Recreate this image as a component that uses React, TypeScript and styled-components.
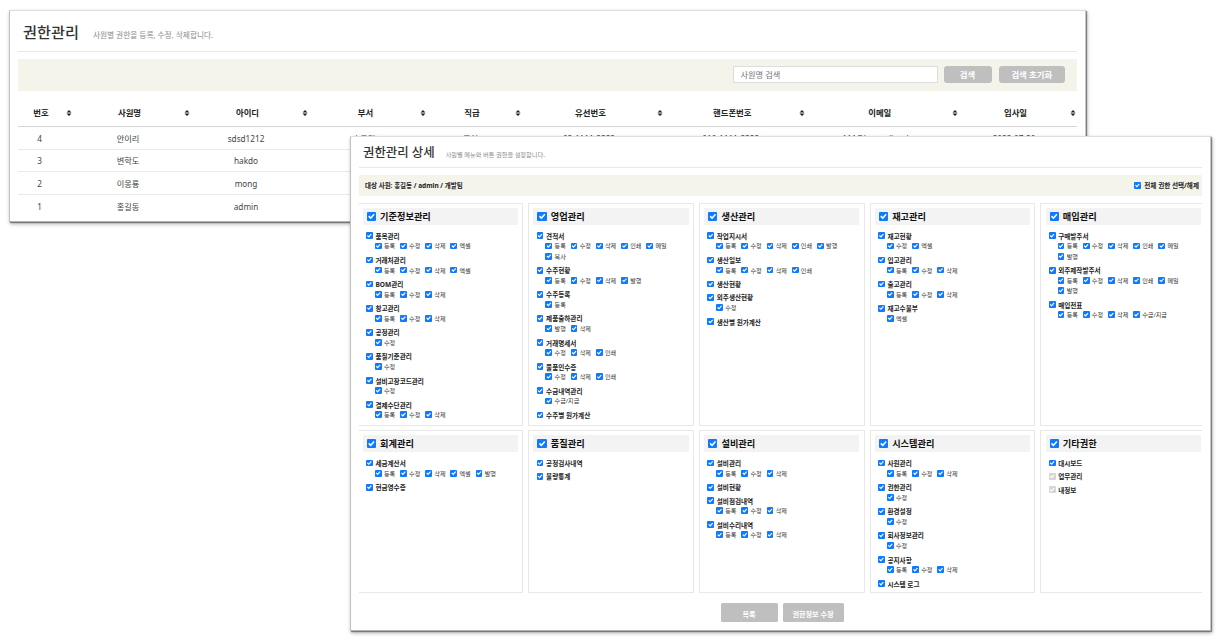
import React from 'react';
import styled, { createGlobalStyle, css } from 'styled-components';

const GlobalStyle = createGlobalStyle`
  * {
    box-sizing: border-box;
  }

  body {
    margin: 0;
    background: #fff;
    font-family: 'Noto Sans', 'Noto Sans CJK KR', sans-serif;
    color: #222;
  }
`;

const Desktop = styled('main')`
  position: relative;
  width: 1222px;
  height: 643px;
  overflow: hidden;
`;

const windowFrame = css`
  position: absolute;
  display: flex;
  flex-direction: column;
  background: #fff;
  border: 1px solid;
  border-color: #dedede #c6c6c6 #b4b4b4 #c0c0c0;
  box-shadow: 1px 1px 1px rgba(0, 0, 0, 0.38), 1px 2px 4px rgba(0, 0, 0, 0.32);
`;

const ListWindow = styled('section')`
  ${windowFrame}
  left: 9px;
  top: 10px;
  width: 1077px;
  height: 212px;
  padding: 0 8px;
`;

const DetailWindow = styled('section')`
  ${windowFrame}
  left: 350px;
  top: 136px;
  width: 861px;
  height: 495px;
  padding: 0 8px;
`;

const PageHeader = styled('header')<{ $compact?: boolean }>`
  display: flex;
  flex: none;
  align-items: center;
  gap: ${(props) => (props.$compact ? '11px' : '14px')};
  height: ${(props) => (props.$compact ? '31px' : '41px')};
  padding-top: ${(props) => (props.$compact ? '1px' : '2px')};
  padding-left: ${(props) => (props.$compact ? '4px' : '5px')};
  border-bottom: 1px solid #e8e8e8;
`;

const PageTitle = styled('h1')<{ $compact?: boolean }>`
  margin: 0;
  font-size: ${(props) => (props.$compact ? '12.4px' : '15.2px')};
  line-height: 20px;
  font-weight: 500;
  color: #333;
  white-space: nowrap;
`;

const PageDescription = styled('p')<{ $compact?: boolean }>`
  margin: ${(props) => (props.$compact ? '4px' : '5px')} 0 0;
  font-size: ${(props) => (props.$compact ? '6.2px' : '7.7px')};
  line-height: 10px;
  color: #8c8c8c;
  white-space: nowrap;
`;

const SearchBar = styled('div')`
  display: flex;
  flex: none;
  justify-content: flex-end;
  align-items: flex-start;
  height: 32px;
  margin-top: 7px;
  padding: 6.5px 12px 0 0;
  background: #f4f4eb;
`;

const SearchInput = styled('input')`
  width: 205px;
  height: 17px;
  margin-right: 6px;
  padding: 0 7px;
  border: 1px solid #ddd;
  font-family: inherit;
  font-size: 8.2px;
  outline: none;

  &::placeholder {
    color: #777;
  }
`;

const SearchButton = styled('button')<{ $width: number }>`
  width: ${(props) => props.$width}px;
  height: 17px;
  padding: 0;
  border: 0;
  border-radius: 3px;
  background: #bfbfbf;
  color: #fff;
  font-family: inherit;
  font-size: 8.4px;
  font-weight: 700;
  line-height: 17px;

  & + & {
    margin-left: 7px;
  }
`;

const TableRow = styled('div')<{ $head?: boolean }>`
  display: grid;
  flex: none;
  grid-template-columns: 55px 118px 118px 118px 95px 142px 141.5px 153.5px 118px;
  align-items: center;
  height: ${(props) => (props.$head ? '36px' : '22.6px')};
  padding-top: ${(props) => (props.$head ? '8px' : '2px')};
  border-bottom: ${(props) => (props.$head ? '1px solid #d5d5d5' : '1px solid #eaeaea')};

  &:last-child {
    border-bottom: 0;
  }
`;

const HeadCell = styled('div')`
  display: flex;
  align-items: center;
  padding-right: 1px;
  font-size: 8.4px;
  font-weight: 700;
  line-height: 12px;

  span {
    flex: 1;
    padding-left: 2px;
    text-align: center;
    white-space: nowrap;
  }

  &:first-child span {
    padding: 0 2px 0 0;
  }
`;

const BodyCell = styled('div')`
  padding-right: 8px;
  font-size: 8.2px;
  line-height: 12px;
  color: #444;
  text-align: center;
  white-space: nowrap;

  &:first-child {
    padding-right: 12px;
  }
`;

const TargetBar = styled('div')`
  display: flex;
  flex: none;
  justify-content: space-between;
  align-items: center;
  height: 21px;
  margin-top: 7px;
  padding: 0 3px 0 6px;
  background: #f4f4eb;
  font-size: 6.5px;
  font-weight: 700;
  line-height: 10px;
  white-space: nowrap;
`;

const PanelGrid = styled('div')`
  display: grid;
  flex: none;
  grid-template-columns: repeat(5, 165.6px);
  grid-template-rows: 222.5px 163px;
  gap: 4.8px 5.1px;
  height: 391px;
  margin-top: 7px;
  overflow: hidden;
`;

const Panel = styled('section')`
  width: 165.6px;
  margin-left: -1.4px;
  padding: 4px 4.2px 0;
  border: 1px solid #e8e8e8;
`;

const PanelTitle = styled('label')`
  display: flex;
  align-items: center;
  gap: 4px;
  height: 17px;
  margin-bottom: 5.8px;
  padding-left: 4px;
  background: #f3f3f3;
  font-size: 9.2px;
  font-weight: 700;
  line-height: 16px;
  color: #111;
  white-space: nowrap;
`;

const Checkbox = styled('input').attrs({ type: 'checkbox' })<{ $size: number }>`
  flex: none;
  display: grid;
  place-items: center;
  appearance: none;
  width: ${(props) => props.$size}px;
  height: ${(props) => props.$size}px;
  margin: 0;
  border-radius: 1px;
  background: #fff;

  &:checked {
    background: #0d7aff;
  }

  &:checked::before {
    content: '';
    width: 76%;
    height: 76%;
    background: #fff;
    clip-path: polygon(4% 52%, 20% 36%, 39% 56%, 80% 10%, 96% 25%, 40% 88%);
  }

  &:disabled {
    background: #d6d6d6;
  }
`;

const MenuItem = styled('div')`
  margin-bottom: 3.4px;
  padding-left: 3.2px;
`;

const MenuLabel = styled('label')<{ $gap?: number }>`
  display: flex;
  align-items: center;
  gap: ${(props) => props.$gap ?? 2.6}px;
  height: 10px;
  font-size: 6.6px;
  font-weight: 700;
  color: #222;
  white-space: nowrap;
`;

const ActionList = styled('div')`
  display: flex;
  flex-wrap: wrap;
  column-gap: 4.9px;
  padding: 0 0 0.45px 8.8px;
`;

const ActionLabel = styled('label')`
  display: flex;
  align-items: center;
  gap: 2.3px;
  height: 10.3px;
  font-size: 6.1px;
  color: #333;
  white-space: nowrap;
`;

const Footer = styled('footer')`
  display: flex;
  justify-content: center;
  gap: 5px;
  margin-top: 9px;
  padding-left: 3px;
`;

const FooterButton = styled('button')<{ $width: number }>`
  width: ${(props) => props.$width}px;
  height: 19px;
  padding: 2px 0 0;
  border: 0;
  border-radius: 1.5px;
  background: #bfbfbf;
  color: #fff;
  font-family: inherit;
  font-size: 7.1px;
  font-weight: 700;
`;

const SortIcon = () => (
  <svg width="6" height="6" viewBox="0 0 6 6" aria-hidden="true">
    <path d="M3 0L5.5 2.6H.5zM3 6L.5 3.4h5z" fill="#222" />
  </svg>
);

const columns = ['번호', '사원명', '아이디', '부서', '직급', '유선번호', '핸드폰번호', '이메일', '입사일'];

const employees = [
  ['4', '안이리', 'sdsd1212', '총무팀', '주임', '02-1111-2222', '010-1111-2222', '111@hotmail.co.kr', '2023-07-20'],
  ['3', '변학도', 'hakdo'],
  ['2', '이몽룡', 'mong'],
  ['1', '홍길동', 'admin'],
];

interface Menu {
  name: string;
  actions?: string;
  disabled?: boolean;
}

interface MenuGroup {
  title: string;
  menus: Menu[];
}

const groups: MenuGroup[] = [
  {
    title: '기준정보관리',
    menus: [
      { name: '품목관리', actions: '등록 수정 삭제 엑셀' },
      { name: '거래처관리', actions: '등록 수정 삭제 엑셀' },
      { name: 'BOM관리', actions: '등록 수정 삭제' },
      { name: '창고관리', actions: '등록 수정 삭제' },
      { name: '공정관리', actions: '수정' },
      { name: '품질기준관리', actions: '수정' },
      { name: '설비고장코드관리', actions: '수정' },
      { name: '결제수단관리', actions: '등록 수정 삭제' },
    ],
  },
  {
    title: '영업관리',
    menus: [
      { name: '견적서', actions: '등록 수정 삭제 인쇄 메일 복사' },
      { name: '수주현황', actions: '등록 수정 삭제 발행' },
      { name: '수주등록', actions: '등록' },
      { name: '제품출하관리', actions: '발행 삭제' },
      { name: '거래명세서', actions: '수정 삭제 인쇄' },
      { name: '물품인수증', actions: '수정 삭제 인쇄' },
      { name: '수금내역관리', actions: '수금/지급' },
      { name: '수주별 원가계산' },
    ],
  },
  {
    title: '생산관리',
    menus: [
      { name: '작업지시서', actions: '등록 수정 삭제 인쇄 발행' },
      { name: '생산일보', actions: '등록 수정 삭제 인쇄' },
      { name: '생산현황' },
      { name: '외주생산현황', actions: '수정' },
      { name: '생산별 원가계산' },
    ],
  },
  {
    title: '재고관리',
    menus: [
      { name: '재고현황', actions: '수정 엑셀' },
      { name: '입고관리', actions: '등록 수정 삭제' },
      { name: '출고관리', actions: '등록 수정 삭제' },
      { name: '재고수불부', actions: '엑셀' },
    ],
  },
  {
    title: '매입관리',
    menus: [
      { name: '구매발주서', actions: '등록 수정 삭제 인쇄 메일 발행' },
      { name: '외주제작발주서', actions: '등록 수정 삭제 인쇄 메일 발행' },
      { name: '매입전표', actions: '등록 수정 삭제 수금/지급' },
    ],
  },
  {
    title: '회계관리',
    menus: [{ name: '세금계산서', actions: '등록 수정 삭제 엑셀 발행' }, { name: '현금영수증' }],
  },
  {
    title: '품질관리',
    menus: [{ name: '공정검사내역' }, { name: '불량통계' }],
  },
  {
    title: '설비관리',
    menus: [
      { name: '설비관리', actions: '등록 수정 삭제' },
      { name: '설비현황' },
      { name: '설비점검내역', actions: '등록 수정 삭제' },
      { name: '설비수리내역', actions: '등록 수정 삭제' },
    ],
  },
  {
    title: '시스템관리',
    menus: [
      { name: '사원관리', actions: '등록 수정 삭제' },
      { name: '권한관리', actions: '수정' },
      { name: '환경설정', actions: '수정' },
      { name: '회사정보관리', actions: '수정' },
      { name: '공지사항', actions: '등록 수정 삭제' },
      { name: '시스템 로그' },
    ],
  },
  {
    title: '기타권한',
    menus: [{ name: '대시보드' }, { name: '업무관리', disabled: true }, { name: '내정보', disabled: true }],
  },
];

const MenuEntry: React.FC<Menu> = ({ name, actions, disabled }) => (
  <MenuItem>
    <MenuLabel>
      <Checkbox $size={6.8} defaultChecked disabled={disabled} />
      {name}
    </MenuLabel>
    {actions && (
      <ActionList>
        {actions.split(' ').map((action) => (
          <ActionLabel key={action}>
            <Checkbox $size={6.8} defaultChecked />
            {action}
          </ActionLabel>
        ))}
      </ActionList>
    )}
  </MenuItem>
);

const EmployeeList = () => (
  <ListWindow>
    <PageHeader>
      <PageTitle>권한관리</PageTitle>
      <PageDescription>사원별 권한을 등록, 수정, 삭제합니다.</PageDescription>
    </PageHeader>
    <SearchBar>
      <SearchInput placeholder="사원명 검색" />
      <SearchButton $width={48}>검색</SearchButton>
      <SearchButton $width={66.5}>검색 초기화</SearchButton>
    </SearchBar>
    <TableRow $head>
      {columns.map((column) => (
        <HeadCell key={column}>
          <span>{column}</span>
          <SortIcon />
        </HeadCell>
      ))}
    </TableRow>
    {employees.map((employee) => (
      <TableRow key={employee[0]}>
        {employee.map((value) => (
          <BodyCell key={value}>{value}</BodyCell>
        ))}
      </TableRow>
    ))}
  </ListWindow>
);

const PermissionDetail = () => (
  <DetailWindow>
    <PageHeader $compact>
      <PageTitle $compact>권한관리 상세</PageTitle>
      <PageDescription $compact>사원별 메뉴와 버튼 권한을 설정합니다.</PageDescription>
    </PageHeader>
    <TargetBar>
      <span>대상 사원: 홍길동 / admin / 개발팀</span>
      <MenuLabel $gap={3.5}>
        <Checkbox $size={6.8} defaultChecked />
        전체 권한 선택/해제
      </MenuLabel>
    </TargetBar>
    <PanelGrid>
      {groups.map((group) => (
        <Panel key={group.title}>
          <PanelTitle>
            <Checkbox $size={9.3} defaultChecked />
            {group.title}
          </PanelTitle>
          {group.menus.map((menu) => (
            <MenuEntry key={menu.name} {...menu} />
          ))}
        </Panel>
      ))}
    </PanelGrid>
    <Footer>
      <FooterButton $width={57}>목록</FooterButton>
      <FooterButton $width={61}>권한정보 수정</FooterButton>
    </Footer>
  </DetailWindow>
);

export default function App() {
  return (
    <>
      <GlobalStyle />
      <Desktop>
        <EmployeeList />
        <PermissionDetail />
      </Desktop>
    </>
  );
}
